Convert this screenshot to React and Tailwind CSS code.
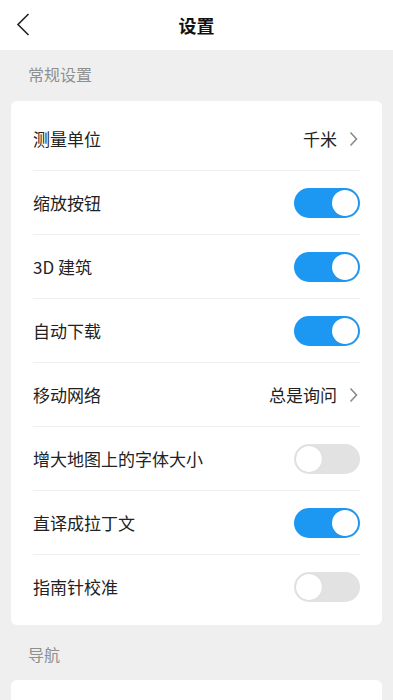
const FONT = {
  fontFamily: '"Noto Sans CJK SC", "Noto Sans", Roboto, sans-serif',
};

const general = [
  { label: "测量单位", value: "千米" },
  { label: "缩放按钮", on: true },
  { label: "3D 建筑", on: true },
  { label: "自动下载", on: true },
  { label: "移动网络", value: "总是询问" },
  { label: "增大地图上的字体大小", on: false },
  { label: "直译成拉丁文", on: true },
  { label: "指南针校准", on: false },
];

function Toggle({ on }) {
  return (
    <div
      className={`flex h-[30px] w-[66px] items-center rounded-full px-[2px] ${
        on ? "justify-end bg-[#1c97f2]" : "justify-start bg-[#e2e2e2]"
      }`}
    >
      <div className="h-[26px] w-[26px] rounded-full bg-white shadow-[0_0_1px_rgba(0,0,0,0.15)]" />
    </div>
  );
}

function Chevron() {
  return (
    <svg width="9" height="16" viewBox="0 0 9 16" fill="none">
      <path d="M1.5 1.5 L7.5 8 L1.5 14.5" stroke="#8a8a8a" strokeWidth="1.6" />
    </svg>
  );
}

function Row({ item, last }) {
  return (
    <div className="px-[22px]">
      <div
        className={`flex h-16 items-center justify-between ${
          last ? "" : "border-b border-[#eeeeee]"
        }`}
      >
        <span className="text-[17px] text-[#222]">{item.label}</span>
        {item.value ? (
          <div className="flex items-center gap-[12px] pr-[2px]">
            <span className="text-[17px] text-[#222]">{item.value}</span>
            <Chevron />
          </div>
        ) : (
          <Toggle on={item.on} />
        )}
      </div>
    </div>
  );
}

export default function App() {
  return (
    <div className="min-h-[700px] w-[393px] bg-[#efefef]" style={FONT}>
      <div className="relative flex h-[50px] items-center justify-center bg-white">
        <svg
          className="absolute left-[16px] top-[13px]"
          width="14"
          height="23"
          viewBox="0 0 14 23"
          fill="none"
        >
          <path d="M12.5 1 L2 11.5 L12.5 22" stroke="#222" strokeWidth="1.6" />
        </svg>
        <span className="text-[18px] font-bold text-[#111]">设置</span>
      </div>
      <div className="px-[28px] pt-[12px] pb-[15px] text-[16px] leading-[24px] text-[#8f8f8f]">
        常规设置
      </div>
      <div className="mx-[11px] rounded-[6px] bg-white py-[6px]">
        {general.map((item, i) => (
          <Row key={item.label} item={item} last={i === general.length - 1} />
        ))}
      </div>
      <div className="px-[28px] pt-[17px] pb-[14px] text-[16px] leading-[24px] text-[#8f8f8f]">
        导航
      </div>
      <div className="mx-[11px] h-[40px] rounded-t-[6px] bg-white" />
    </div>
  );
}
